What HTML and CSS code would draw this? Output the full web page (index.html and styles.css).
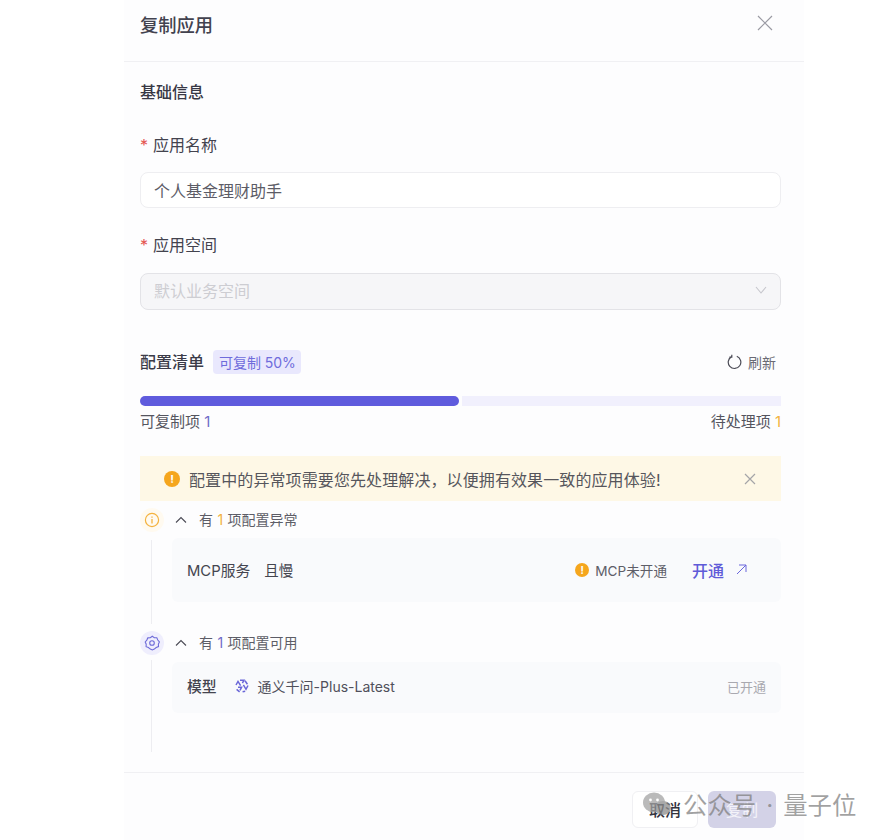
FILE: index.html
```html
<!DOCTYPE html>
<html lang="zh-CN">
<head>
<meta charset="utf-8">
<title>复制应用</title>
<link rel="stylesheet" href="styles.css">
</head>
<body>
<div class="page">
  <div class="dialog">
    <header class="dialog-head">
      <h1 class="dialog-title">复制应用</h1>
      <svg class="close-icon" width="16" height="16" viewBox="0 0 16 16"><path d="M1 1l14 14M15 1L1 15" stroke="#9a9aa3" stroke-width="1.2" fill="none"/></svg>
    </header>
    <main class="content">
      <h2 class="section-title">基础信息</h2>
      <div class="label label-first"><span class="req">*</span>应用名称</div>
      <div class="input">个人基金理财助手</div>
      <div class="label label-second"><span class="req">*</span>应用空间</div>
      <div class="select">
        <span>默认业务空间</span>
        <svg width="12" height="8" viewBox="0 0 12 8"><path d="M1 1l5 6 5-6" stroke="#c6c6cc" stroke-width="1.1" fill="none"/></svg>
      </div>
      <div class="config-head">
        <span class="config-title">配置清单</span>
        <span class="tag">可复制 50%</span>
        <span class="refresh">
          <svg width="15" height="16" viewBox="0 0 15 16"><path d="M4.6 2.6A6.3 6.3 0 1 0 9.8 2.3M4.8 .8v2.4H2.4" stroke="#4a4a55" stroke-width="1.2" fill="none"/></svg>
          <span>刷新</span>
        </span>
      </div>
      <div class="progress"><div class="progress-done"></div><div class="progress-rest"></div></div>
      <div class="counts">
        <span>可复制项 <b class="num-blue">1</b></span>
        <span>待处理项 <b class="num-amber">1</b></span>
      </div>
      <div class="banner">
        <span class="dot dot-lg">!</span>
        <span class="banner-text">配置中的异常项需要您先处理解决，以便拥有效果一致的应用体验!</span>
        <svg width="12" height="12" viewBox="0 0 12 12"><path d="M1 1l10 10M11 1L1 11" stroke="#a5a5a8" stroke-width="1.2" fill="none"/></svg>
      </div>
      <section class="group group-warn">
        <div class="rail">
          <span class="rail-icon rail-icon-warn">
            <svg width="16" height="16" viewBox="0 0 16 16"><circle cx="8" cy="8" r="6.6" stroke="#f4b23e" stroke-width="1.2" fill="none"/><path d="M8 7v4.4M8 4.4v1.3" stroke="#f4b23e" stroke-width="1.3"/></svg>
          </span>
          <span class="rail-line"></span>
        </div>
        <div class="group-body">
          <div class="group-head">
            <svg width="12" height="8" viewBox="0 0 12 8"><path d="M1 6.5L6 1.5l5 5" stroke="#4a4a55" stroke-width="1.1" fill="none"/></svg>
            <span class="group-label">有 <b class="num-amber">1</b> 项配置异常</span>
          </div>
          <div class="card card-tall">
            <span class="item-name">MCP服务</span>
            <span class="item-value">且慢</span>
            <span class="status"><span class="dot dot-sm">!</span>MCP未开通</span>
            <span class="open-link">开通</span>
            <svg class="open-arrow" width="11" height="11" viewBox="0 0 11 11"><path d="M1 10L10 1M3 1h7v7" stroke="#6a66dc" stroke-width="1" fill="none"/></svg>
          </div>
        </div>
      </section>
      <section class="group group-ok">
        <div class="rail">
          <span class="rail-icon rail-icon-ok">
            <svg width="16" height="16" viewBox="0 0 16 16"><path d="M8 1.2l2 1.4 2.5.1 1 2.2 1.6 1.9-1 2.2.1 2.5-2.3.9L10 14l-2 .8-2-.8-1.9-1.5-2.3-.9.1-2.5-1-2.2 1.6-1.9 1-2.2 2.5-.1z" transform="translate(.3 .1)" stroke="#6e6bd8" stroke-width="1.1" fill="none"/><circle cx="8" cy="8" r="2.3" stroke="#6e6bd8" stroke-width="1.1" fill="none"/></svg>
          </span>
          <span class="rail-line"></span>
        </div>
        <div class="group-body">
          <div class="group-head">
            <svg width="12" height="8" viewBox="0 0 12 8"><path d="M1 6.5L6 1.5l5 5" stroke="#4a4a55" stroke-width="1.1" fill="none"/></svg>
            <span class="group-label">有 <b class="num-blue">1</b> 项配置可用</span>
          </div>
          <div class="card card-short">
            <span class="item-name model-name">模型</span>
            <svg class="model-logo" width="14" height="14" viewBox="0 0 14 14"><path d="M5 1.2h4l-1.6 3M1 6l2-3.6 2.6 4.2M13 6.5l-2 3.8-2.6-4.4M3 8.2H6.6L5 11.4M1.6 10.4l3 2.4M10 1.8l2.4 3.4M7.6 12.8l2.6-.6" stroke="#6a66d8" stroke-width="1.5" fill="none"/></svg>
            <span class="model-text">通义千问-Plus-Latest</span>
            <span class="done">已开通</span>
          </div>
        </div>
      </section>
    </main>
    <footer class="dialog-foot">
      <span class="btn btn-cancel">取消</span>
      <span class="btn btn-primary">复制</span>
    </footer>
  </div>
  <div class="watermark">
    <svg class="wm-icon" width="28" height="26" viewBox="0 0 28 26"><ellipse cx="11" cy="10.5" rx="11" ry="10" fill="#a3a3a3"/><ellipse cx="20" cy="16" rx="8" ry="7" fill="#8d8d8d"/><circle cx="7.5" cy="8" r="1.4" fill="#fff"/><circle cx="14.5" cy="8" r="1.4" fill="#fff"/></svg>
    <span class="wm-text">公众号</span>
    <span class="wm-sep">·</span>
    <span class="wm-text">量子位</span>
  </div>
</div>
</body>
</html>
```
FILE: styles.css
```css
* { box-sizing: border-box; }
html, body { margin: 0; padding: 0; background: #fff; }
body {
  font-family: Inter, "Noto Sans CJK SC", sans-serif;
  color: #3f3f4b;
  font-size: 14px;
}
.page { position: relative; width: 884px; height: 840px; overflow: hidden; }
.dialog { width: 680px; height: 840px; margin-left: 124px; background: #fdfdfe; }

.dialog-head {
  height: 62px;
  padding: 15px 31px 0 16px;
  border-bottom: 1px solid #f0f0f3;
  display: flex;
  justify-content: space-between;
  align-items: flex-start;
}
.dialog-title { margin: -2px 0 0; font-size: 18.3px; line-height: 24px; font-weight: 500; color: #42424f; }

.content { padding: 18px 23px 0 16px; }
.section-title { margin: 0; font-size: 16px; line-height: 24px; font-weight: 500; color: #383845; }

.label { font-size: 16px; line-height: 24px; color: #43434e; }
.label-first { margin-top: 29px; }
.label-second { margin-top: 25px; }
.req { display: inline-block; width: 13px; color: #e4544f; }

.input, .select {
  display: flex;
  align-items: center;
  padding: 0 13px;
  font-size: 16px;
  border-radius: 8px;
}
.input { margin-top: 15px; height: 36px; background: #fff; border: 1px solid #eeeef1; color: #5c5c66; }
.select {
  margin-top: 16px;
  height: 37px;
  padding-bottom: 3px;
  justify-content: space-between;
  background: #f6f6f8;
  border: 1px solid #e3e3e7;
  color: #cdcdd2;
}

.config-head { margin-top: 40px; height: 24px; display: flex; align-items: center; }
.config-title { font-size: 16px; font-weight: 500; color: #3b3b48; margin-top: -2px; }
.tag {
  margin-left: 9px;
  height: 24px;
  padding: 0 5px 1px 6px;
  display: flex;
  align-items: center;
  background: #e9e8fd;
  border-radius: 4px;
  color: #6f6cdc;
  font-size: 14px;
  letter-spacing: -.05px;
}
.refresh { margin-left: auto; margin-right: 5px; display: flex; align-items: center; gap: 6px; color: #6a6a74; }

.progress { margin-top: 22px; height: 10px; display: flex; gap: 3px; }
.progress-done { width: 319px; background: #5f5bdd; border-radius: 5px; }
.progress-rest { flex: 1; background: #f1f0fd; }

.counts { margin-top: 6px; display: flex; justify-content: space-between; font-size: 15px; line-height: 20px; color: #55555f; }
.counts b, .group-head b { font-weight: 400; }
.num-blue { color: #6f6cc8; }
.num-amber { color: #f2b23f; }

.banner {
  margin-top: 24px;
  height: 45px;
  padding: 0 25px 0 24px;
  display: flex;
  align-items: center;
  background: #fef8e6;
}
.banner-text { margin-left: 9px; margin-right: auto; font-size: 16px; letter-spacing: .1px; color: #56565c; }
.dot {
  display: flex;
  align-items: center;
  justify-content: center;
  border-radius: 50%;
  background: #f5a61d;
  color: #fff;
  font-weight: 700;
  flex: none;
}
.dot-lg { width: 16px; height: 16px; font-size: 11px; }
.dot-sm { width: 14px; height: 14px; font-size: 10px; margin-right: 6px; }

.group { display: grid; grid-template-columns: 24px 1fr; column-gap: 8px; }
.group-warn { margin-top: 7px; }
.group-ok { margin-top: 7px; }
.rail { display: flex; flex-direction: column; align-items: center; }
.rail-icon { width: 24px; height: 24px; border-radius: 50%; display: flex; align-items: center; justify-content: center; flex: none; }
.rail-icon-warn { background: #fffaf0; }
.rail-icon-ok { background: #efeefd; }
.rail-line { flex: 1; width: 1px; margin-top: 8px; margin-right: 1px; background: #ededf1; }
.group-ok .rail-line { margin-top: 5px; }

.group-warn .group-body { padding-bottom: 22px; }
.group-ok .group-body { padding-bottom: 39px; }
.group-head { height: 24px; display: flex; align-items: center; gap: 12px; padding-left: 3px; font-size: 14px; color: #5d5d67; }
.group-label { margin-top: -2px; word-spacing: .5px; }

.card { display: flex; align-items: center; padding: 0 15px; background: #f9fafc; border-radius: 6px; }
.card-tall { margin-top: 6px; height: 64px; }
.card-short { margin-top: 7px; height: 51px; padding-bottom: 3px; }
.item-name { font-size: 14.8px; color: #44444f; margin-top: -1px; }
.item-value { margin-left: 14px; font-size: 14.5px; color: #44444f; margin-top: -1px; }
.status { margin-left: auto; display: flex; align-items: center; color: #5e5e68; font-size: 13.6px; }
.open-link { margin-left: 25px; font-size: 16px; font-weight: 500; color: #5f5bd8; margin-top: -1px; }
.open-arrow { margin-left: 12px; margin-right: 19px; margin-top: -1px; }
.model-name { font-weight: 500; }
.model-logo { margin-left: 18px; }
.model-text { margin-left: 9px; font-size: 14px; color: #50505b; }
.done { margin-left: auto; font-size: 13px; color: #a9a9b0; }

.dialog-foot {
  margin-top: 20px;
  border-top: 1px solid #f0f0f3;
  padding: 18px 28px 0 0;
  display: flex;
  justify-content: flex-end;
  gap: 10px;
}
.btn { height: 37px; border-radius: 6px; display: flex; align-items: center; justify-content: center; font-size: 16px; padding-bottom: 2px; }
.btn-cancel { width: 66px; background: #fff; border: 1px solid #f0f0f3; color: #33333d; font-weight: 500; }
.btn-primary { width: 68px; background: #d3d2e7; color: #f3f3f9; }

.watermark {
  position: absolute;
  left: 643px;
  top: 790px;
  height: 30px;
  display: flex;
  align-items: center;
  font-size: 24.4px;
  line-height: 30px;
  color: rgba(125, 125, 125, .72);
}
.wm-icon { margin-right: 12px; opacity: .75; }
.wm-sep { width: 27px; text-align: center; }
```
